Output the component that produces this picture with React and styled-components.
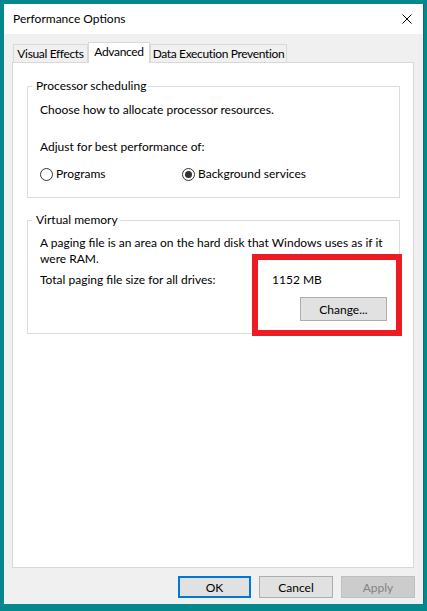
import React from "react";
import styled, { createGlobalStyle } from "styled-components";

const GlobalStyle = createGlobalStyle`
  body {
    margin: 0;
    background: #03888e;
    font-family: Lato, "Noto Sans", sans-serif;
    font-size: 12px;
    color: #000;
  }
`;

const Frame = styled.div`
  width: 427px;
  height: 611px;
  box-sizing: border-box;
  padding: 4px 4px 7px 4px;
  background: #03888e;
`;

const Window = styled.div`
  height: 100%;
  display: flex;
  flex-direction: column;
  background: #f0f0f0;
  box-shadow: 1px 0 0 #0d6f75;
`;

const TitleBar = styled.div`
  height: 30px;
  flex-shrink: 0;
  display: flex;
  align-items: center;
  padding-left: 9px;
  background: #fff;
`;

const Title = styled.span`
  font-size: 12px;
  line-height: 16px;
`;

const CloseButton = styled.div`
  margin-left: auto;
  padding-right: 11px;
  display: flex;
  align-items: center;
`;

const Body = styled.div`
  flex: 1;
  display: flex;
  flex-direction: column;
  padding: 8px 9px 6px 8px;
`;

const TabStrip = styled.div`
  display: flex;
  align-items: flex-end;
  height: 21px;
  padding-left: 1px;
  margin-bottom: -1px;
  position: relative;
  z-index: 1;
`;

const Tab = styled.div`
  box-sizing: border-box;
  width: ${p => p.$width}px;
  height: ${p => (p.$active ? "21px" : "18px")};
  margin-bottom: ${p => (p.$active ? "0" : "1px")};
  padding-top: ${p => (p.$active ? "1px" : "0")};
  display: flex;
  justify-content: center;
  align-items: ${p => (p.$active ? "flex-start" : "center")};
  border: 1px solid #d9d9d9;
  border-bottom: none;
  background: ${p => (p.$active ? "#fff" : "#f0f0f0")};
  line-height: 16px;
  letter-spacing: -0.35px;
  white-space: nowrap;
`;

const Panel = styled.div`
  flex: 1;
  position: relative;
  background: #fff;
  border: 1px solid #d9d9d9;
  padding: 15px 13px 0 14px;
`;

const Group = styled.fieldset`
  margin: 0 0 ${p => p.$gap || 0}px;
  padding: 0;
  min-width: 0;
  border: 1px solid #dcdcdc;
`;

const Legend = styled.legend`
  margin-left: 4px;
  padding: 0 2px 0 4px;
  line-height: 16px;
`;

const GroupBody = styled.div`
  padding: ${p => p.$pad};
`;

const Line = styled.div`
  line-height: 16px;
  margin-top: ${p => p.$top || 0}px;
  white-space: nowrap;
`;

const RadioRow = styled.div`
  display: grid;
  grid-template-columns: 142px auto;
  margin-top: 11px;
`;

const RadioLabel = styled.label`
  display: flex;
  align-items: center;
  gap: 3px;
  line-height: 16px;
`;

const RadioCircle = styled.span`
  width: 13px;
  height: 13px;
  box-sizing: border-box;
  border-radius: 50%;
  border: 1px solid #333;
  background: #fff;
  display: flex;
  align-items: center;
  justify-content: center;

  &::after {
    content: "";
    display: ${p => (p.$checked ? "block" : "none")};
    width: 7px;
    height: 7px;
    border-radius: 50%;
    background: #333;
  }
`;

const SizeRow = styled.div`
  display: grid;
  grid-template-columns: 232px auto;
  line-height: 16px;
  margin-top: 5px;
`;

const ChangeRow = styled.div`
  display: flex;
  justify-content: flex-end;
  margin-top: 9px;
`;

const Button = styled.button`
  box-sizing: border-box;
  width: ${p => p.$width}px;
  height: ${p => p.$height || 22}px;
  padding: 0;
  font-family: inherit;
  font-size: 12px;
  color: ${p => (p.disabled ? "#838383" : "#000")};
  background: ${p => (p.disabled ? "#cccccc" : "#e1e1e1")};
  border: ${p =>
    p.$primary ? "2px solid #0078d7" : p.disabled ? "1px solid #bfbfbf" : "1px solid #adadad"};
`;

const ButtonBar = styled.div`
  display: flex;
  justify-content: flex-end;
  gap: 8px;
  margin-top: 8px;
  margin-right: -1px;
`;

const Highlight = styled.div`
  position: absolute;
  left: 239px;
  top: 191px;
  width: 150px;
  height: 82px;
  box-sizing: border-box;
  border: 6px solid #ed1c24;
  pointer-events: none;
`;

const CloseIcon = () => (
  <svg width="10" height="10" viewBox="0 0 10 10">
    <path d="M0.5 0.5 L9.5 9.5 M9.5 0.5 L0.5 9.5" stroke="#000" strokeWidth="1" />
  </svg>
);

const Radio = ({ checked, children }) => (
  <RadioLabel>
    <RadioCircle $checked={checked} />
    {children}
  </RadioLabel>
);

export default function App() {
  return (
    <Frame>
      <GlobalStyle />
      <Window>
        <TitleBar>
          <Title>Performance Options</Title>
          <CloseButton>
            <CloseIcon />
          </CloseButton>
        </TitleBar>
        <Body>
          <TabStrip>
            <Tab $width={75}>Visual Effects</Tab>
            <Tab $width={62} $active>Advanced</Tab>
            <Tab $width={137}>Data Execution Prevention</Tab>
          </TabStrip>
          <Panel>
            <Group $gap={14}>
              <Legend>Processor scheduling</Legend>
              <GroupBody $pad="8px 12px 15px">
                <Line>Choose how to allocate processor resources.</Line>
                <Line $top={21}>Adjust for best performance of:</Line>
                <RadioRow>
                  <Radio>Programs</Radio>
                  <Radio checked>Background services</Radio>
                </RadioRow>
              </GroupBody>
            </Group>
            <Group>
              <Legend>Virtual memory</Legend>
              <GroupBody $pad="7px 12px 12px">
                <Line>A paging file is an area on the hard disk that Windows uses as if it</Line>
                <Line>were RAM.</Line>
                <SizeRow>
                  <span>Total paging file size for all drives:</span>
                  <span>1152 MB</span>
                </SizeRow>
                <ChangeRow>
                  <Button $width={87} $height={24}>Change...</Button>
                </ChangeRow>
              </GroupBody>
            </Group>
            <Highlight />
          </Panel>
          <ButtonBar>
            <Button $width={73} $primary>OK</Button>
            <Button $width={74}>Cancel</Button>
            <Button $width={74} disabled>Apply</Button>
          </ButtonBar>
        </Body>
      </Window>
    </Frame>
  );
}
